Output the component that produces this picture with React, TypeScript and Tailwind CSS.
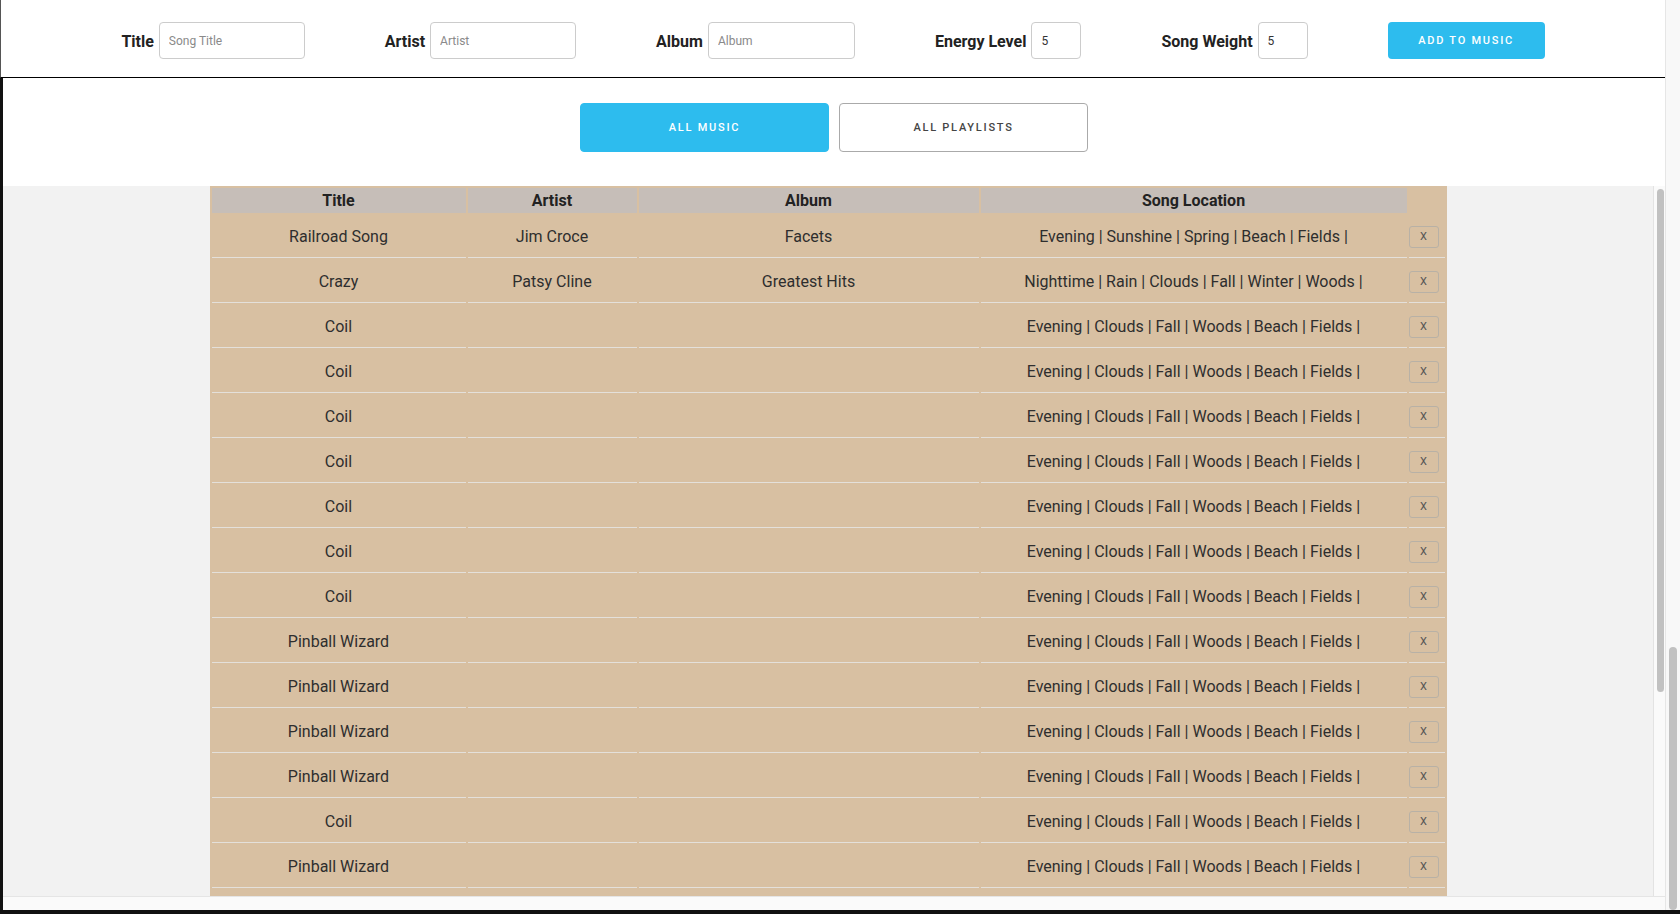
import { useState } from "react"

const locA = "Evening | Clouds | Fall | Woods | Beach | Fields |"

const songs = [
  { title: "Railroad Song", artist: "Jim Croce", album: "Facets", location: "Evening | Sunshine | Spring | Beach | Fields |" },
  { title: "Crazy", artist: "Patsy Cline", album: "Greatest Hits", location: "Nighttime | Rain | Clouds | Fall | Winter | Woods |" },
  { title: "Coil", artist: "", album: "", location: locA },
  { title: "Coil", artist: "", album: "", location: locA },
  { title: "Coil", artist: "", album: "", location: locA },
  { title: "Coil", artist: "", album: "", location: locA },
  { title: "Coil", artist: "", album: "", location: locA },
  { title: "Coil", artist: "", album: "", location: locA },
  { title: "Coil", artist: "", album: "", location: locA },
  { title: "Pinball Wizard", artist: "", album: "", location: locA },
  { title: "Pinball Wizard", artist: "", album: "", location: locA },
  { title: "Pinball Wizard", artist: "", album: "", location: locA },
  { title: "Pinball Wizard", artist: "", album: "", location: locA },
  { title: "Coil", artist: "", album: "", location: locA },
  { title: "Pinball Wizard", artist: "", album: "", location: locA },
  { title: "Coil", artist: "", album: "", location: locA },
  { title: "Coil", artist: "", album: "", location: locA },
]

function Field({ label, placeholder, value, width }: { label: string; placeholder?: string; value?: string; width: string }) {
  return (
    <label className="flex items-center gap-[5px]">
      <span className="pt-[2px] text-[16px] font-bold text-[#222]">{label}</span>
      <input
        defaultValue={value}
        placeholder={placeholder}
        className={`${width} h-[37px] rounded-[4px] border border-[#cccccc] bg-white px-[9px] pt-[1px] text-[12px] text-[#333] placeholder:text-[#8a8a8a] outline-none`}
      />
    </label>
  )
}

export default function App() {
  const [tab, setTab] = useState("music")

  return (
    <div className="flex h-[914px] w-full flex-col overflow-hidden bg-white font-['Roboto',sans-serif]">
      <div className="flex min-h-0 flex-1">
        <div className="flex min-w-0 flex-1 flex-col">
          {/* Add song form */}
          <div className="flex h-[78px] shrink-0 items-center justify-center gap-[80px] border-b border-l border-b-black border-l-[#555] pt-[4px]">
            <Field label="Title" placeholder="Song Title" width="w-[146px]" />
            <Field label="Artist" placeholder="Artist" width="w-[146px]" />
            <Field label="Album" placeholder="Album" width="w-[147px]" />
            <Field label="Energy Level" value="5" width="w-[50px]" />
            <Field label="Song Weight" value="5" width="w-[50px]" />
            <button className="h-[37px] w-[157px] rounded-[4px] bg-[#2dbcee] pt-[2px] text-[11px] font-medium tracking-[0.16em] text-white">
              ADD TO MUSIC
            </button>
          </div>

          <div className="flex min-h-0 flex-1 flex-col border-l-[3px] border-[#111]">
            {/* Tabs */}
            <div className="flex h-[108px] shrink-0 justify-center gap-[10px] pt-[25px]">
              <button
                onClick={() => setTab("music")}
                className={`h-[49px] w-[249px] rounded-[4px] border pt-[2px] text-[11px] font-medium tracking-[0.16em] ${
                  tab === "music" ? "border-[#2dbcee] bg-[#2dbcee] text-white" : "border-[#aaaaaa] bg-white text-[#444]"
                }`}
              >
                ALL MUSIC
              </button>
              <button
                onClick={() => setTab("playlists")}
                className={`h-[49px] w-[249px] rounded-[4px] border pt-[2px] text-[11px] font-medium tracking-[0.16em] ${
                  tab === "playlists" ? "border-[#2dbcee] bg-[#2dbcee] text-white" : "border-[#aaaaaa] bg-white text-[#444]"
                }`}
              >
                ALL PLAYLISTS
              </button>
            </div>

            {/* Song table */}
            <div className="flex min-h-0 flex-1">
              <div className="min-w-0 flex-1 overflow-hidden bg-[#f2f2f2]">
                <table className="mx-auto w-[1237px] table-fixed border-separate border-spacing-[2px] bg-[#d8c0a2] text-[16px] text-[#2e2e2e]">
                  <colgroup>
                    <col className="w-[254px]" />
                    <col className="w-[169px]" />
                    <col className="w-[340px]" />
                    <col className="w-[426px]" />
                    <col className="w-[36px]" />
                  </colgroup>
                  <thead>
                    <tr>
                      <th className="h-[24px] bg-[#c6beb8] p-0 pt-[1px] font-bold text-[#222]">Title</th>
                      <th className="h-[24px] bg-[#c6beb8] p-0 pt-[1px] font-bold text-[#222]">Artist</th>
                      <th className="h-[24px] bg-[#c6beb8] p-0 pt-[1px] font-bold text-[#222]">Album</th>
                      <th className="h-[24px] bg-[#c6beb8] p-0 pt-[1px] font-bold text-[#222]">Song Location</th>
                      <th className="p-0"></th>
                    </tr>
                  </thead>
                  <tbody>
                    {songs.map((song, i) => (
                      <tr key={i}>
                        <td className="h-[43px] border-b border-[#e4e0da] p-0 pt-[2px] text-center">{song.title}</td>
                        <td className="h-[43px] border-b border-[#e4e0da] p-0 pt-[2px] text-center">{song.artist}</td>
                        <td className="h-[43px] border-b border-[#e4e0da] p-0 pt-[2px] text-center">{song.album}</td>
                        <td className="h-[43px] border-b border-[#e4e0da] p-0 pt-[2px] text-center">{song.location}</td>
                        <td className="h-[43px] border-b border-[#e4e0da] p-0 pt-[2px]">
                          <button className="flex h-[22px] w-[30px] items-center justify-center rounded-[3px] border border-[#b8b1a6] text-[11px] text-[#555]">
                            X
                          </button>
                        </td>
                      </tr>
                    ))}
                  </tbody>
                </table>
              </div>
              {/* inner scrollbar */}
              <div className="w-[12px] shrink-0 border-l border-[#e3e3e3] bg-[#fafafa] pl-[3px] pt-[3px]">
                <div className="h-[503px] w-[7px] rounded-full bg-[#c1c1c1]" />
              </div>
            </div>
            <div className="h-[14px] shrink-0 border-t border-[#e5e5e5] bg-[#fafafa]" />
          </div>
        </div>

        {/* page scrollbar */}
        <div className="w-[15px] shrink-0 border-l border-[#e6e6e6] bg-[#f8f8f8] pl-[3px] pt-[647px]">
          <div className="h-[263px] w-[8px] rounded-full bg-[#c1c1c1]" />
        </div>
      </div>
      <div className="h-[4px] shrink-0 bg-[#111]" />
    </div>
  )
}
